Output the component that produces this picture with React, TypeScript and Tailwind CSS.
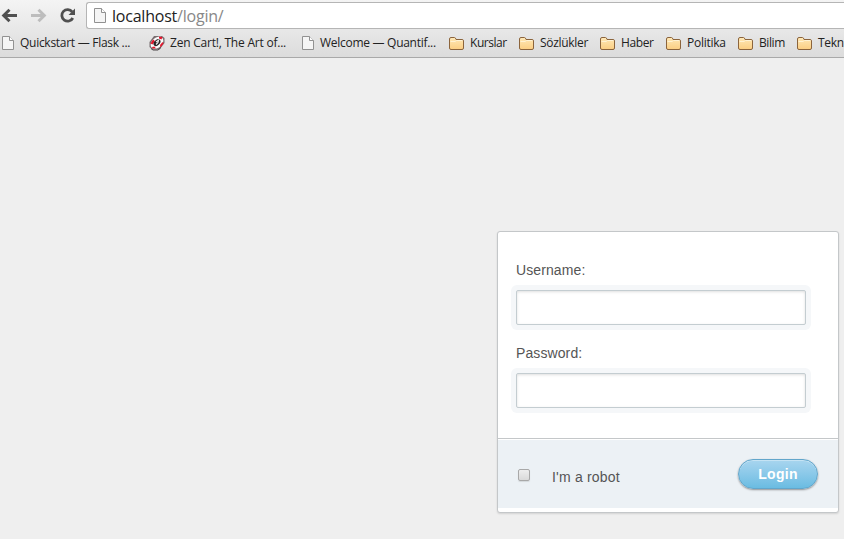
import React from "react";

function PageIcon({ className = "", w = 12, h = 14 }: { className?: string; w?: number; h?: number }) {
  return (
    <svg className={`shrink-0 ${className}`} width={w} height={h} viewBox={`0 0 ${w} ${h}`}>
      <path d={`M.5 .5H${w - 4.5}L${w - 0.5} 4.5V${h - 0.5}H.5Z`} fill="#f5f5f5" stroke="#919191" />
      <path d={`M${w - 4.5} .5V4.5H${w - 0.5}`} fill="#fff" stroke="#919191" />
    </svg>
  );
}

function FolderIcon() {
  return (
    <svg className="shrink-0" width="15" height="13" viewBox="0 0 15 13">
      <defs>
        <linearGradient id="folder" x2="0" y2="1">
          <stop stopColor="#ffe9b8" />
          <stop offset="1" stopColor="#fbce82" />
        </linearGradient>
      </defs>
      <path d="M.5 11V2Q.5 .5 2 .5H5.5Q6.6 .5 7 2.5H13Q14.5 2.5 14.5 4V11Q14.5 12.5 13 12.5H2Q.5 12.5 .5 11Z" fill="url(#folder)" stroke="#8b643c" />
      <path d="M1.5 4.5H6L7.5 3.5H13.5" fill="none" stroke="#fff3d4" />
    </svg>
  );
}

function ZenIcon() {
  return (
    <svg className="shrink-0" width="16" height="16" viewBox="0 0 16 16">
      <path d="M5 1H13L15.5 3V8L10.5 14.5H3L.5 12V7Z" fill="#776d6f" />
      <ellipse cx="8" cy="7.7" rx="7.2" ry="5" transform="rotate(-42 8 7.7)" fill="#fafafa" />
      <path d="M1.5 8.5L4 4.5L6 6L3.5 9.5ZM10 1.5L13.5 2L12.5 4.5L10 3.5ZM11 10L13.5 7L14.5 8.5L11.5 12.5ZM3 12L5.5 11.5L7 13.5H3.5Z" fill="#e5162d" />
      <ellipse cx="8" cy="7.6" rx="4" ry="2.7" transform="rotate(-45 8 7.6)" fill="#292426" />
      <path d="M7 7L9.5 5.2L9 7.5L7 9.5" fill="none" stroke="#eee" strokeWidth="1.1" />
      <path d="M2 13.5L4 15H9L12 12.5" fill="none" stroke="#4b4446" />
    </svg>
  );
}

const bookmarks = [
  { label: "Quickstart — Flask ...", icon: "page", cell: "w-[147px] gap-[6px]", text: "tracking-[-0.28px]" },
  { label: "Zen Cart!, The Art of...", icon: "zen", cell: "w-[153px] gap-[5px]", text: "tracking-[-0.22px]" },
  { label: "Welcome — Quantif...", icon: "page", cell: "w-[147px] gap-[6px]", text: "tracking-[-0.28px]" },
  { label: "Kurslar", icon: "folder", cell: "w-[70px] gap-[6px]", text: "tracking-[-0.45px]" },
  { label: "Sözlükler", icon: "folder", cell: "w-[81px] gap-[6px]", text: "tracking-[-0.3px]" },
  { label: "Haber", icon: "folder", cell: "w-[66px] gap-[6px]", text: "tracking-[-0.4px]" },
  { label: "Politika", icon: "folder", cell: "w-[72px] gap-[6px]", text: "tracking-[-0.25px]" },
  { label: "Bilim", icon: "folder", cell: "w-[59px] gap-[6px]", text: "tracking-[-0.4px]" },
  { label: "Tekn", icon: "folder", cell: "w-[60px] gap-[6px]", text: "tracking-[-0.3px]" },
];

function BrowserChrome() {
  return (
    <header className="h-[58px] overflow-hidden border-b border-[#a9a9a9] bg-linear-to-b from-[#f4f4f4] to-[#dcdcdc] font-['Open_Sans','Noto_Sans',sans-serif]">
      <div className="flex h-[29px] items-start pt-[2px]">
        <div className="flex h-[27px] w-[86px] shrink-0 items-center">
          <svg width="80" height="18" viewBox="0 0 80 18">
            <path d="M17 8.5H4M9.5 2.8L3.7 8.5L9.5 14.2" fill="none" stroke="#505050" strokeWidth="3" />
            <path d="M31 8.5H44M38.5 2.8L44.3 8.5L38.5 14.2" fill="none" stroke="#bdbdbd" strokeWidth="3" />
            <path d="M72.2 4.8A5.8 5.8 0 1 0 72.8 11" fill="none" stroke="#505050" strokeWidth="2.8" />
            <path d="M75 1.5V8H68.5Z" fill="#505050" />
          </svg>
        </div>
        <div className="flex h-[27px] flex-1 items-center rounded-l-[3px] border border-r-0 border-[#b5b5b5] bg-white pl-[7px]">
          <PageIcon w={12} h={15} />
          <span className="ml-[6px] whitespace-nowrap text-[16px] leading-5 tracking-[-0.22px] text-[#222]">
            localhost<span className="text-[#888]">/login/</span>
          </span>
        </div>
      </div>
      <nav className="flex h-[28px] w-[870px] items-center pl-[2px]">
        {bookmarks.map((b) => (
          <div key={b.label} className={`flex shrink-0 items-center ${b.cell}`}>
            {b.icon === "page" ? <PageIcon /> : b.icon === "zen" ? <ZenIcon /> : <FolderIcon />}
            <span className={`whitespace-nowrap text-[12px] leading-4 text-[#222] ${b.text}`}>{b.label}</span>
          </div>
        ))}
      </nav>
    </header>
  );
}

function Field({ label, type }: { label: string; type: string }) {
  return (
    <label className="block h-[83px]">
      <span className="block h-[30px] text-[14px] leading-5 tracking-[0.1px] text-[#555]">{label}</span>
      <input
        type={type}
        className="block h-[35px] w-[290px] rounded-[2px] border border-[#c4cdd1] bg-white px-2 shadow-[inset_0_1px_3px_rgba(0,0,0,0.13),0_0_0_5px_#f5f7f9] outline-none"
      />
    </label>
  );
}

export default function App() {
  return (
    <div className="flex h-[539px] w-[844px] flex-col overflow-hidden bg-[#efefef]">
      <BrowserChrome />
      <main className="flex flex-1 justify-end pr-[5px] pt-[173px] font-['Liberation_Sans',Arial,sans-serif]">
        <form className="flex h-[282px] w-[342px] flex-col rounded-[3px] border border-[#c4c7c9] bg-white shadow-[0_1px_2px_rgba(0,0,0,0.12)]" onSubmit={(e) => e.preventDefault()}>
          <div className="h-[206px] pl-[18px] pt-[28px]">
            <Field label="Username:" type="text" />
            <Field label="Password:" type="password" />
          </div>
          <div className="flex h-[70px] border-t border-[#c4c7c9] bg-[#ecf1f5] pl-5 pr-5 shadow-[inset_0_1px_0_#fff]">
            <label className="flex flex-1 items-start">
              <input type="checkbox" className="mt-[30px] size-3 appearance-none rounded-[2px] border border-[#a8a8a8] bg-linear-to-b from-[#eeeeee] to-[#dadada] shadow-[0_1px_1px_rgba(0,0,0,0.1)]" />
              <span className="ml-[22px] mt-[28px] text-[14px] leading-5 tracking-[0.2px] text-[#555]">I'm a robot</span>
            </label>
            <button className="mt-5 h-[30px] w-[80px] rounded-full border border-[#62a6cb] bg-linear-to-b from-[#a8d5ef] to-[#6abce2] text-[14px] font-bold leading-5 tracking-[0.3px] text-white shadow-[0_1px_2px_rgba(0,0,0,0.4),inset_0_1px_0_rgba(255,255,255,0.35)]">
              Login
            </button>
          </div>
        </form>
      </main>
    </div>
  );
}
